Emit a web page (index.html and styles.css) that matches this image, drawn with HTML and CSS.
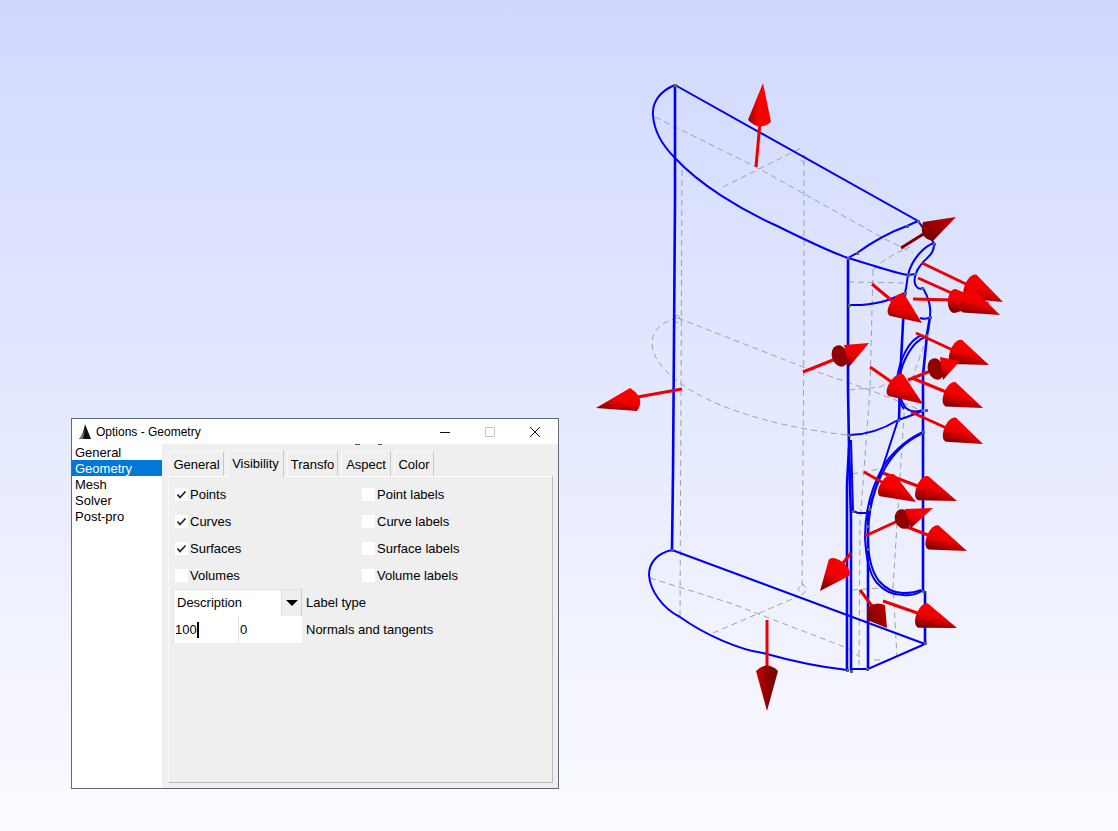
FILE: index.html
```html
<!DOCTYPE html>
<html lang="en">
<head>
<meta charset="UTF-8" />
<title>Options - Geometry</title>
<link rel="stylesheet" href="styles.css">
</head>
<body>
<svg class="model" viewBox="0 0 1118 831" width="1118" height="831">
  <defs>
    <linearGradient id="coneRed" x1="0.7" y1="0" x2="0.3" y2="1">
      <stop offset="0" stop-color="#ff0000"/>
      <stop offset="0.55" stop-color="#f00000"/>
      <stop offset="1" stop-color="#800000"/>
    </linearGradient>
    <linearGradient id="coneUp" x1="0" y1="0" x2="1" y2="0">
      <stop offset="0" stop-color="#a00000"/>
      <stop offset="0.5" stop-color="#ff0000"/>
      <stop offset="1" stop-color="#ee0000"/>
    </linearGradient>
    <linearGradient id="coneDown" x1="0" y1="0" x2="1" y2="0">
      <stop offset="0" stop-color="#d00000"/>
      <stop offset="0.5" stop-color="#900000"/>
      <stop offset="1" stop-color="#700000"/>
    </linearGradient>
    <linearGradient id="coneDark" x1="1" y1="0" x2="0" y2="1">
      <stop offset="0" stop-color="#c80000"/>
      <stop offset="1" stop-color="#6a0000"/>
    </linearGradient>
  </defs>

  <!-- hidden edges -->
  <g class="hidden-edges">
    <path d="M655 117L756 167L883 238L913 253"/>
    <path d="M723 187L803 147"/>
    <path d="M804 160V330L802 587"/>
    <path d="M682 170L681 400L680 617"/>
    <path d="M678 318C660 322 652 332 652 343C652 358 665 372 680 383C705 402 760 425 847 435"/>
    <path d="M678 318L803 367L870 390L923 411"/>
    <path d="M650 578L730 603L847 648L860 657"/>
    <path d="M713 633L797 597"/>
    <path d="M873 270C885 258 898 252 910 247"/>
    <path d="M873 270L870 390L860 523L859 665"/>
    <path d="M848 282L907 283"/>
    <path d="M849 390L880 387L905 372"/>
    <path d="M852 474L885 468"/>
    <path d="M930 327L905 400L893 587L897 657"/>
    <path d="M852 590L893 587"/>
    <path d="M802 583l5 6l-5 6l-4 -6z"/>
    <path d="M804 155l4 4l-4 4l-4 -4z"/>
    <path d="M677 315l4 4l-4 4l-4 -4z"/>
    <path d="M874 660h10"/>
  </g>

  <!-- curves -->
  <g class="curves">
    <path d="M675 85C660 91 652 102 653 115C654 133 665 148 675 158C700 185 740 209 775 225C800 237 825 250 848 258"/>
    <path d="M675 85L918 221L934 243"/>
    <path class="thick" d="M675 85V201L674 338L673 473L672 550"/>
    <path d="M672 550C658 553 649 562 649 575C650 590 662 608 680 617C705 635 740 650 763 653C795 662 820 667 847 670"/>
    <path d="M672 550L925 644"/>
    <path d="M925 644L868 669H851"/>
    <path class="thick" d="M848 258V390L849 447L847 485V670"/>
    <path class="thick" d="M849 447L851 520V671"/>
    <path class="thick" d="M868 510V669"/>
    <path d="M848 258C870 264 890 272 908 275L916 274"/>
    <path d="M848 258L857 253C875 240 890 232 907 226L918 221"/>
    <path d="M849 305C875 306 890 300 905 293C907 285 907 280 908 275"/>
    <path d="M934 243C935 255 925 258 920 266C915 272 913 282 916 286C918 289 921 289 923 288"/>
    <path d="M934 243C925 246 912 258 908 275"/>
    <path d="M923 288C930 300 931 310 930 317C926 320 923 319 920 318"/>
    <path class="thick" d="M905 293L903 323L900 380L899 420"/>
    <path class="thick" d="M930 317L927 335L923 375V590"/>
    <path class="thick" d="M925 591V644"/>
    <path d="M925 337C912 342 903 360 899 378C898 390 901 403 906 408C912 413 918 412 923 410"/>
    <path d="M922 335C908 340 900 360 897 378C897 392 899 403 904 409"/>
    <path d="M849 435C870 435 885 428 898 420C908 417 915 414 922 411"/>
    <path d="M898 420L885 460L870 505"/>
    <path d="M923 432C905 440 890 455 883 467C870 490 865 515 865 537C866 560 870 575 877 583C885 592 895 595 903 595C912 596 918 594 923 590"/>
    <path d="M921 434C904 442 892 456 885 468C872 491 868 515 868 537C868 558 872 572 879 581C886 589 895 593 903 593C911 593 917 592 921 590"/>
    <path d="M853 511L858 513H869"/>
    <path d="M851 440L853 511"/>
  </g>

  <!-- points -->
  <path class="points" d="M674 84h3v3h-3zM917 220h3v3h-3zM847 257h3v3h-3zM856 252h3v3h-3zM906 225h3v3h-3zM933 243h3v3h-3zM907 274h3v3h-3zM914 273h3v3h-3zM904 292h3v3h-3zM848 304h3v3h-3zM921 287h3v3h-3zM929 316h3v3h-3zM925 334h3v3h-3zM921 409h3v3h-3zM925 409h3v3h-3zM897 419h3v3h-3zM848 434h3v3h-3zM922 431h3v3h-3zM852 510h3v3h-3zM868 508h3v3h-3zM867 525h3v3h-3zM867 548h3v3h-3zM922 590h3v3h-3zM924 642h3v3h-3zM846 669h3v3h-3zM850 670h3v3h-3zM866 668h3v3h-3zM671 549h3v3h-3z"/>

  <!-- normals and tangents -->
  <g class="shafts">
    <path d="M756 167L760 122"/>
    <path class="dark-shaft" d="M901 248L925 233"/>
    <path d="M682 389L632 398"/>
    <path d="M767 620V668"/>
    <path d="M803 372L838 358"/>
    <path d="M872 284L897 305"/>
    <path d="M922 263L968 285"/>
    <path d="M918 278L965 299"/>
    <path d="M913 299L955 300"/>
    <path d="M916 333L957 352"/>
    <path d="M908 380L938 368"/>
    <path d="M912 378L951 394"/>
    <path d="M870 367L896 385"/>
    <path d="M911 412L951 430"/>
    <path d="M864 472L887 485"/>
    <path d="M883 473L923 488"/>
    <path d="M865 536L900 520"/>
    <path d="M897 523L933 537"/>
    <path d="M851 553L839 568"/>
    <path d="M860 590L875 610"/>
    <path d="M883 601L923 615"/>
  </g>
  <g class="cones">
    <path fill="url(#coneUp)" d="M748 120Q760 132 771 122L763 83Z"/>
    <path fill="url(#coneDark)" d="M923 222Q918 238 933 241L956 217Z"/>
    <path fill="url(#coneRed)" d="M630 388Q646 398 637 411L596 408Z"/>
    <path fill="url(#coneDown)" d="M756 671Q767 660 778 671L767 711Z"/>
    <ellipse class="cap" cx="840" cy="356" rx="8" ry="11" transform="rotate(-20 840 356)"/>
    <path fill="url(#coneRed)" d="M844 345L869 343L849 367Z"/>
    <path fill="url(#coneRed)" d="M954.5 313C945 313 946 289 955.5 289L990 303Z"/>
    <path fill="url(#coneRed)" d="M966.4 298.8C958.1 295.3 968.3 271.3 976.6 274.8L1003 302Z"/>
    <path fill="url(#coneRed)" d="M963 312.6C954.7 309.1 964.9 285.1 973.2 288.6L1000 315Z"/>
    <path fill="url(#coneRed)" d="M889.6 315.7C882.2 310.6 897 289.2 904.4 294.3L922 323Z"/>
    <path fill="url(#coneRed)" d="M951.9 364C943.6 360.5 953.8 336.5 962.1 340L989 365Z"/>
    <ellipse class="cap" cx="936" cy="369" rx="8" ry="11" transform="rotate(-20 936 369)"/>
    <path fill="url(#coneRed)" d="M940 357L960 361L943 380Z"/>
    <path fill="url(#coneRed)" d="M945.7 406.4C937.4 402.9 947.6 378.9 955.9 382.4L983 408Z"/>
    <path fill="url(#coneRed)" d="M888.6 395.9C881.2 390.8 896 369.4 903.4 374.5L923 404Z"/>
    <path fill="url(#coneRed)" d="M945.9 441.8C937.6 438.3 947.8 414.3 956.1 417.8L983 444Z"/>
    <path fill="url(#coneRed)" d="M880 496.2C872.6 491.1 887.4 469.7 894.8 474.8L916 502Z"/>
    <path fill="url(#coneRed)" d="M918.2 500.3C909.9 496.8 920.1 472.8 928.4 476.3L957 501Z"/>
    <ellipse class="cap" cx="903" cy="519" rx="8" ry="10" transform="rotate(-20 903 519)"/>
    <path fill="url(#coneRed)" d="M905 509L933 508L911 528Z"/>
    <path fill="url(#coneRed)" d="M928.5 549.6C920.2 546.1 930.4 522.1 938.7 525.6L967 551Z"/>
    <path fill="url(#coneRed)" d="M828.8 559.6C834.5 552.6 854.7 569 849 576L820 591Z"/>
    <path fill="url(#coneDark)" d="M867 607Q876 601 885 605L887 628L867 620Z"/>
    <path fill="url(#coneRed)" d="M918.1 627.7C909.8 624.2 920 600.2 928.3 603.7L957 628Z"/>
  </g>
</svg>

<div class="window">
  <div class="titlebar">
    <svg class="app-icon" viewBox="0 0 12 15" width="12" height="15">
      <path d="M6 0L12 15H0C3 12 5 6 6 0Z" fill="#111"/>
      <path d="M6 5L4 15H0C3 12 5 8 6 5Z" fill="#777"/>
    </svg>
    <span class="title">Options - Geometry</span>
    <div class="controls">
      <svg viewBox="0 0 10 10" width="10" height="10"><path d="M0 5.5H10" stroke="#111" fill="none"/></svg>
      <svg viewBox="0 0 10 10" width="10" height="10"><path d="M.5 .5H9.5V9.5H.5Z" stroke="#c4c4c4" fill="none"/></svg>
      <svg viewBox="0 0 10 10" width="10" height="10"><path d="M0 0L10 10M10 0L0 10" stroke="#111" fill="none"/></svg>
    </div>
  </div>
  <div class="window-body">
    <ul class="categories">
      <li>General</li>
      <li class="selected">Geometry</li>
      <li>Mesh</li>
      <li>Solver</li>
      <li>Post-pro</li>
    </ul>
    <div class="pane">
      <i class="speck speck-a"></i>
      <i class="speck speck-b"></i>
      <div class="tabs">
        <div class="tab tab-general">General</div>
        <div class="tab tab-visibility active">Visibility</div>
        <div class="tab tab-transfo">Transfo</div>
        <div class="tab tab-aspect">Aspect</div>
        <div class="tab tab-color">Color</div>
      </div>
      <div class="panel">
        <div class="checks">
          <label class="check on">Points</label>
          <label class="check">Point labels</label>
          <label class="check on">Curves</label>
          <label class="check">Curve labels</label>
          <label class="check on">Surfaces</label>
          <label class="check">Surface labels</label>
          <label class="check">Volumes</label>
          <label class="check">Volume labels</label>
        </div>
        <div class="field-row">
          <div class="choice">
            <span class="choice-value">Description</span>
            <span class="choice-btn"></span>
          </div>
          <span class="field-label">Label type</span>
        </div>
        <div class="field-row">
          <div class="num"><span>100</span><i class="caret"></i></div>
          <div class="num"><span>0</span></div>
          <span class="field-label">Normals and tangents</span>
        </div>
      </div>
    </div>
  </div>
</div>
</body>
</html>
```
FILE: styles.css
```css
html, body { margin: 0; height: 100%; }
body {
  width: 1118px;
  height: 831px;
  overflow: hidden;
  position: relative;
  background: linear-gradient(#d0d8ff, #fbfbff);
  font-family: "Liberation Sans", Arial, sans-serif;
  font-size: 13px;
  color: #000;
}
.model { position: absolute; left: 0; top: 0; }
.hidden-edges path { fill: none; stroke: #a2a2a2; stroke-width: 1; stroke-dasharray: 6 4; }
.curves path { fill: none; stroke: #0000f5; stroke-width: 2; }
.curves path.thick { stroke-width: 2.6; }
.points { fill: #555f78; }
.shafts path { fill: none; stroke: #ee0000; stroke-width: 3; }
.shafts path.dark-shaft { stroke: #7a0000; }
.cap { fill: #8f0000; }

.window {
  position: absolute;
  left: 71px;
  top: 418px;
  width: 486px;
  height: 369px;
  border: 1px solid #5d6a7c;
  background: #efefef;
  display: flex;
  flex-direction: column;
}
.titlebar {
  height: 25px;
  background: #fff;
  display: flex;
  align-items: center;
  padding-left: 7px;
  flex: none;
}
.app-icon { margin-right: 5px; }
.title { font-size: 12px; }
.controls {
  margin-left: auto;
  display: flex;
  gap: 35px;
  padding-right: 18px;
}
.window-body { flex: 1; display: flex; min-height: 0; }
.categories {
  list-style: none;
  margin: 0;
  padding: 0;
  width: 90px;
  flex: none;
  background: #fff;
}
.categories li { height: 16px; line-height: 18px; padding-left: 3px; }
.categories li.selected { background: #0078d7; color: #fff; }
.pane {
  flex: 1;
  padding: 5px 5px 5px 6px;
  display: flex;
  flex-direction: column;
  min-width: 0;
  position: relative;
}
.speck { position: absolute; top: 0; height: 1px; background: #555; }
.speck-a { left: 193px; width: 5px; }
.speck-b { left: 216px; width: 4px; }
.tabs { display: flex; height: 27px; align-items: flex-end; gap: 3px; padding-left: 1px; flex: none; }
.tab {
  height: 25px;
  line-height: 26px;
  text-align: center;
  border-top: 1px solid #fafafa;
  border-left: 1px solid #fafafa;
  border-right: 1px solid #c8c8c8;
  box-sizing: border-box;
  white-space: nowrap;
}
.tab-general { width: 55px; }
.tab-visibility { width: 57px; }
.tab-transfo { width: 51px; }
.tab-aspect { width: 50px; }
.tab-color { width: 40px; }
.tab.active { height: 27px; line-height: 26px; position: relative; top: 1px; background: #efefef; }
.panel {
  flex: 1;
  border-top: 1px solid #fff;
  border-left: 1px solid #fafafa;
  border-right: 1px solid #bcbcbc;
  border-bottom: 1px solid #bcbcbc;
  padding: 4px 0 0 4px;
}
.checks {
  display: grid;
  grid-template-columns: 187px 1fr;
  grid-auto-rows: 27px;
  padding-left: 2px;
}
.check {
  display: flex;
  align-items: center;
  gap: 2px;
  height: 27px;
}
.check::before {
  content: "";
  width: 13px;
  height: 13px;
  background: #fff;
  flex: none;
}
.check.on::before {
  background: #fff url("data:image/svg+xml,%3Csvg xmlns='http://www.w3.org/2000/svg' viewBox='0 0 13 13'%3E%3Cpath d='M2.5 6.5L5 9.5L10.5 3.5' fill='none' stroke='%23222' stroke-width='1.7'/%3E%3C/svg%3E") no-repeat center;
}
.field-row { display: flex; height: 27px; align-items: stretch; }
.choice {
  width: 129px;
  box-sizing: border-box;
  display: flex;
  background: #fff;
  border-top: 1px solid #e2e2e2;
  border-left: 1px solid #e2e2e2;
  border-right: 1px solid #d0d0d0;
}
.choice-value { flex: 1; padding-left: 3px; line-height: 26px; }
.choice-btn {
  width: 19px;
  background: #efefef;
  border-left: 1px solid #e0e0e0;
  display: flex;
  align-items: center;
  justify-content: center;
}
.choice-btn::before {
  content: "";
  border-left: 6px solid transparent;
  border-right: 6px solid transparent;
  border-top: 6px solid #000;
}
.num {
  width: 65px;
  box-sizing: border-box;
  background: #fff;
  border-left: 1px solid #e2e2e2;
  padding-left: 1px;
  line-height: 26px;
  display: flex;
  align-items: center;
}
.num + .num { width: 64px; }
.caret { width: 2px; height: 16px; background: #000; }
.field-label { margin-left: 4px; line-height: 27px; }
```
